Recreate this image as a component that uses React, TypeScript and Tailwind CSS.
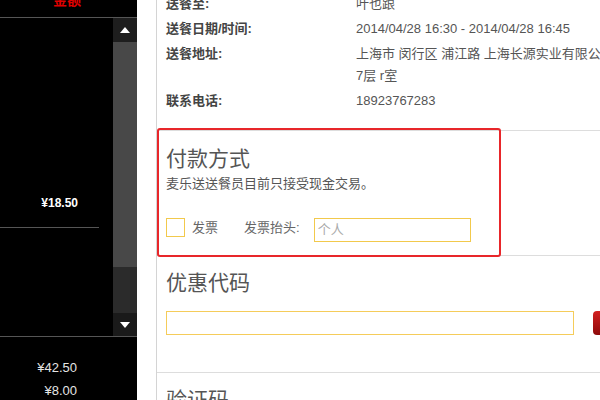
const font = { fontFamily: '"Liberation Sans", "Noto Sans CJK SC", sans-serif' }

function Triangle({ up }: { up?: boolean }) {
  return (
    <svg width="10" height="6" viewBox="0 0 10 6">
      <path d={up ? 'M0 6 L5 0 L10 6 Z' : 'M0 0 L10 0 L5 6 Z'} fill="#fff" />
    </svg>
  )
}

const details = [
  { label: '送餐至:', value: ['叶也跟'] },
  { label: '送餐日期/时间:', value: ['2014/04/28 16:30 - 2014/04/28 16:45'] },
  { label: '送餐地址:', value: ['上海市 闵行区 浦江路 上海长源实业有限公司', '7层 r室'] },
  { label: '联系电话:', value: ['18923767283'] },
]

export default function App() {
  return (
    <div className="relative flex h-[400px] w-[600px] overflow-hidden bg-white" style={font}>
      <aside className="flex w-[137px] shrink-0 flex-col bg-black">
        <div className="relative h-[18px] shrink-0 border-b border-[#555]">
          <p className="absolute left-[53px] top-[-8px] text-[14px] font-bold leading-[16px] text-[#e00000]">金额</p>
        </div>
        <div className="flex h-[318px] shrink-0">
          <div className="flex-1 pt-[177px]">
            <div className="w-[99px] border-b border-[#555] pb-[16px]">
              <p className="w-[78px] text-right text-[12px] font-bold leading-[16px] text-white">¥18.50</p>
            </div>
          </div>
          <div className="flex w-[24px] flex-col">
            <div className="flex h-[24px] items-center justify-center bg-[#1e1e1e]"><Triangle up /></div>
            <div className="h-[225px] bg-[#484848]" />
            <div className="flex-1 bg-[#2b2b2b]" />
            <div className="flex h-[23px] items-center justify-center bg-[#1a1a1a]"><Triangle /></div>
          </div>
        </div>
        <div className="border-t border-[#555] pt-[19px] text-[13px] leading-[23px] text-[#e5e5e5]">
          <p className="w-[77px] text-right">¥42.50</p>
          <p className="w-[77px] text-right">¥8.00</p>
        </div>
      </aside>

      <div className="w-[19px] shrink-0" />

      <main className="min-w-0 flex-1 border-l border-[#d4d4d4]">
        <section className="mt-[-7px] flex flex-col gap-[3px] pb-[18px] pl-[9px] text-[13px] leading-[22px]">
          {details.map((row) => (
            <div key={row.label} className="flex">
              <span className="w-[190px] shrink-0 font-bold text-[#444]">{row.label}</span>
              <div className="whitespace-nowrap text-[#555]">
                {row.value.map((line) => <p key={line}>{line}</p>)}
              </div>
            </div>
          ))}
        </section>

        <section className="border-t border-[#ddd] pb-[13px] pl-[9px] pt-[16px]">
          <h2 className="text-[21px] leading-[24px] text-[#555]">付款方式</h2>
          <p className="mt-[5px] text-[13px] leading-[16px] text-[#555]">麦乐送送餐员目前只接受现金交易。</p>
          <div className="mt-[26px] flex items-start text-[13px] text-[#666]">
            <span className="h-[19px] w-[19px] shrink-0 border border-[#f2c94c]" />
            <span className="ml-[7px] leading-[20px]">发票</span>
            <span className="ml-[26px] leading-[20px]">发票抬头:</span>
            <div className="ml-[14px] flex h-[24px] w-[157px] shrink-0 items-center border border-[#f2c94c] px-[3px] text-[13px] text-[#aaa]">个人</div>
          </div>
        </section>

        <section className="border-t border-[#ddd] pb-[37px] pl-[9px] pt-[15px]">
          <h2 className="text-[21px] leading-[24px] text-[#555]">优惠代码</h2>
          <div className="mt-[16px] flex items-center">
            <div className="h-[24px] w-[408px] shrink-0 border border-[#f5cc5a]" />
            <div className="ml-[19px] h-[24px] w-[20px] shrink-0 rounded-[4px] bg-gradient-to-b from-[#d32020] to-[#8e0b0b]" />
          </div>
        </section>

        <section className="border-t border-[#ddd] pl-[9px] pt-[15px]">
          <h2 className="text-[21px] leading-[24px] text-[#555]">验证码</h2>
        </section>
      </main>

      <div className="absolute left-[157px] top-[128px] h-[129px] w-[344px] rounded-[3px] border-2 border-[#e8262a]" />
    </div>
  )
}
